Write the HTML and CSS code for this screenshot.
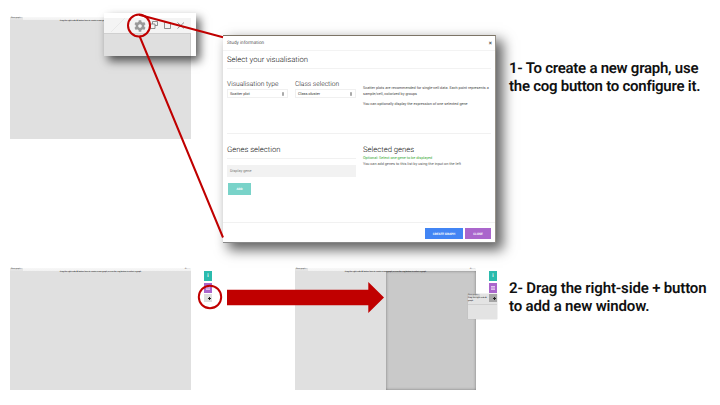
FILE: index.html
```
<!DOCTYPE html>
<html lang="en">
<head>
<meta charset="utf-8">
<title>Creating graphs</title>
<link rel="stylesheet" href="styles.css">
</head>
<body>
<main class="slide">
  <section class="step step-one">
    <div class="pane">
      <div class="window">
        <div class="titlebar"><span class="tab">New graph ×</span></div>
        <div class="canvas"><p class="hint">Drag the right-side <b>✚</b> button here to create a new graph, or use the cog button to select a graph</p></div>
      </div>
      <div class="magnifier">
        <div class="mag-bar">
          <svg width="92" height="15" viewBox="0 0 92 15">
            <path d="M7 14 21 0" stroke="#e9e9e9" fill="none"/>
            <g transform="translate(36 8)" stroke="#999" fill="none">
              <circle r="3.100" stroke-width="2.600"/>
              <path d="M0-3.500V-5.700M0 3.500V5.700M3-1.750 4.900-2.850M3 1.750 4.900 2.850M-3-1.750-4.900-2.850M-3 1.750-4.900 2.850" stroke-width="2.600"/>
            </g>
            <path d="M48.500 6V3.500h5V7.500h-2.500M46.500 6h4.500v4.500h-4.500zM60.500 4.500h6v6h-6zM73.500 4.500l6.500 6M80 4.500l-6.500 6" fill="none" stroke="#777" stroke-width=".8"/>
          </svg>
        </div>
        <div class="mag-body"></div>
      </div>
    </div>
    <div class="dialog">
      <header class="dialog-head"><span>Study information</span><span class="x">×</span></header>
      <h1>Select your visualisation</h1>
      <div class="choices">
        <div><h2>Visualisation type</h2><div class="select"><span>Scatter plot</span><svg width="2" height="4" viewBox="0 0 2 4"><path d="M0 1.600 1 0l1 1.600zM0 2.400 1 4l1-1.600z" fill="#333"/></svg></div></div>
        <div><h2>Class selection</h2><div class="select"><span>Class:cluster</span><svg width="2" height="4" viewBox="0 0 2 4"><path d="M0 1.600 1 0l1 1.600zM0 2.400 1 4l1-1.600z" fill="#333"/></svg></div></div>
        <div class="about"><p>Scatter plots are recommended for single-cell data. Each point represents a<br>sample/cell, colorized by groups</p><p>You can optionally display the expression of one selected gene</p></div>
      </div>
      <div class="genes">
        <div><h2 class="ruled">Genes selection</h2><div class="input">Display gene</div><div class="btn add">ADD</div></div>
        <div class="selected"><h2>Selected genes</h2><p class="green">Optional: Select one gene to be displayed</p><p class="listing">You can add genes to this list by using the input on the left</p></div>
      </div>
      <footer class="dialog-foot"><div class="btn create">CREATE GRAPH</div><div class="btn close">CLOSE</div></footer>
    </div>
    <p class="caption">1- To create a new graph, use<br>the cog button to configure it.</p>
  </section>
  <section class="step step-two">
    <div class="window">
      <div class="titlebar"><span class="tab">New graph ×</span><span class="tools">✿▫ ▫ ×</span></div>
      <div class="canvas"><p class="hint">Drag the right-side <b>✚</b> button here to create a new graph, or use the cog button to select a graph</p></div>
    </div>
    <div class="rail">
      <div class="tile teal">i</div><div class="tile purple"><svg width="4" height="4" viewBox="0 0 4 4"><path d="M0 0h4v4H0z" fill="#e2c6ee"/><path d="M0 1.500h4M0 2.700h4" stroke="#aa66cc" stroke-width=".4"/></svg></div><div class="tile plus"><svg width="3" height="3" viewBox="0 0 3 3"><path d="M1.500 0v3M0 1.500h3" stroke="#222"/></svg></div>
    </div>
    <div class="window target">
      <div class="titlebar"><span class="tab">New graph ×</span><span class="tools">✿▫ ▫ ×</span></div>
      <div class="canvas split"><div class="drop"></div><p class="hint">Drag the right-side <b>✚</b> button here to create a new graph, or use the cog button to select a graph</p></div>
      <div class="ghost"><span class="ghost-tab">New graph ×</span><p>Drag the right-side ✚<br>graph</p></div>
    </div>
    <div class="rail rail-right">
      <div class="tile teal">i</div><div class="tile purple"><svg width="4" height="4" viewBox="0 0 4 4"><path d="M0 0h4v4H0z" fill="#e2c6ee"/><path d="M0 1.500h4M0 2.700h4" stroke="#aa66cc" stroke-width=".4"/></svg></div><div class="tile plus dark"><svg width="3" height="3" viewBox="0 0 3 3"><path d="M1.500 0v3M0 1.500h3" stroke="#222"/></svg></div>
    </div>
    <p class="caption">2- Drag the right-side + button<br>to add a new window.</p>
  </section>
  <svg class="annotations" width="720" height="405" viewBox="0 0 720 405">
    <g fill="none" stroke="#c00000" stroke-width="2">
      <path d="M139 14.800 223 37.200M139.500 36 223 237.500"/>
      <circle cx="139" cy="25.500" r="11"/>
      <circle cx="210" cy="297" r="11.200"/>
    </g>
    <path d="M227 289.800H368.300V282L384 297.500 368.300 313V305.200H227z" fill="#c00000"/>
  </svg>
</main>
</body>
</html>
```
FILE: styles.css
```
* { box-sizing: border-box; }
body { margin: 0; background: #fff; font-family: Roboto, "Liberation Sans", sans-serif; color: #333; text-rendering: geometricPrecision; }
p, h1, h2 { margin: 0; }
.slide { position: relative; width: 720px; height: 405px; overflow: hidden; display: grid; grid-template-rows: 258px 147px; }
.step { display: grid; align-items: start; }
.step-one { grid-template-columns: 213px 273px 1fr; padding-left: 10px; }
.step-two { grid-template-columns: 181px 8px 251px 8px 1fr; column-gap: 13px; padding: 10px 0 0 10px; }
.step-two .target { margin-left: 70px; }

.pane { position: relative; padding-top: 17px; }
.window { position: relative; width: 181px; height: 122px; display: flex; flex-direction: column; }
.titlebar { height: 3px; display: flex; justify-content: space-between; background: linear-gradient(#f8f8f8, #f1f1f1); font-size: 2px; line-height: 3px; color: #444; }
.tab { padding: 0 1px; background: #e4e4e4; white-space: nowrap; }
.tools { padding-right: 1px; color: #777; }
.canvas { flex: 1; background: #e0e0e0; position: relative; }
.hint { position: relative; text-align: center; font-size: 1.930px; line-height: 3px; font-weight: 500; color: #333; white-space: nowrap; }

.magnifier { position: absolute; left: 94px; top: 13px; width: 92px; height: 43px; padding-top: 5px; background: #fff; box-shadow: 4px 5px 9px rgba(0,0,0,.65); }
.mag-bar { width: 87px; height: 15px; background: #f4f4f4; }
.mag-bar svg { display: block; }
.mag-body { width: 87px; height: 23px; background: #dfdfdf; border-top: 1px solid #d0d0d0; border-right: 1px solid #ccc; }

.dialog { margin-top: 35px; width: 273px; height: 208px; background: #fff; border-top: 1px solid #7c7466; border-right: 1px solid #969188; border-bottom: 1px solid #888; box-shadow: 6px 6px 12px 1px rgba(0,0,0,.62); padding: 0 4px; display: flex; flex-direction: column; }
.dialog-head { height: 15px; margin: 0 -4px; padding: 0 3px 0 4px; border-bottom: 1px solid #f3f3f3; display: flex; justify-content: space-between; align-items: center; font-size: 4.700px; font-weight: 400; color: #555; }
.x { font-size: 6px; font-weight: 700; }
h1 { height: 18px; border-bottom: 1px solid #f2f2f2; font-size: 7.700px; line-height: 17px; font-weight: 300; color: #111; white-space: nowrap; }
h2 { font-size: 6.700px; line-height: 8px; font-weight: 300; color: #111; white-space: nowrap; }
.choices { height: 65px; padding-top: 11px; display: grid; grid-template-columns: 61px 61px 1fr; column-gap: 7px; border-bottom: 1px solid #f1f1f1; }
.select { margin-top: 1px; height: 9px; border: 1px solid #f0f0f0; display: flex; justify-content: space-between; align-items: center; padding: 0 3px 0 2px; font-size: 3.850px; color: #333; }
.about { padding-top: 5px; font-size: 3.780px; line-height: 6px; white-space: nowrap; color: #444; }
.about p + p { margin-top: 4px; }
.genes { height: 88px; padding-top: 11px; display: grid; grid-template-columns: 129px 1fr; column-gap: 7px; }
.genes h2 { font-size: 7.700px; line-height: 9px; }
.genes .ruled { height: 14px; border-bottom: 1px solid #f1f1f1; }
.input { margin-top: 6px; height: 12px; padding-left: 3px; background: #f2f2f2; font-size: 3.800px; line-height: 11px; color: #777; }
.btn { display: flex; align-items: center; justify-content: center; color: #fff; font-size: 3.100px; font-weight: 700; }
.add { width: 23px; height: 12px; margin: 6px 0 0 1px; background: #79d3c9; }
.selected p { font-size: 3.800px; line-height: 5.600px; white-space: nowrap; color: #555; }
.selected .green { color: #32a832; margin-top: 1px; }
.dialog-foot { flex: 1; margin: 0 -4px; padding: 5px 4px 0 0; border-top: 1px solid #f1f1f1; display: flex; justify-content: flex-end; gap: 2px; }
.dialog-foot .btn { height: 11px; }
.create { width: 38px; background: #4285f4; }
.close { width: 26px; background: #aa66cc; }

.caption { font-size: 15px; line-height: 18px; font-weight: 600; letter-spacing: -.26px; color: #111; white-space: nowrap; }
.step-one .caption { margin: 59px 0 0 13px; }
.step-two .caption { margin: 11px 0 0 -1px; letter-spacing: -.16px; }

.rail { padding-top: 3px; display: flex; flex-direction: column; gap: 1.500px; }
.tile { height: 10px; display: flex; align-items: center; justify-content: center; color: #fff; font-size: 5px; line-height: 5px; font-weight: 700; }
.teal { background: #2bbbad; }
.purple { background: #aa66cc; }
.plus { height: 8px; background: #dedede; padding-left: 3px; }
.dark { background: #a6a6a6; }
.rail-right { z-index: 2; }
.drop { position: absolute; inset: 0 0 0 91px; background: #c9c9c9; box-shadow: inset 0 0 3px #777; }
.ghost { position: absolute; left: 173px; top: 26px; width: 29px; height: 25px; background: #e3e3e3; font-size: 2px; line-height: 3px; color: #333; white-space: nowrap; box-shadow: 0 0 1px #aaa; }
.ghost-tab { display: block; width: 12px; height: 3px; background: #d2d2d2; }
.ghost p { height: 8px; border-bottom: 1px solid #d0d0d0; font-weight: 500; }
.annotations { position: absolute; inset: 0; z-index: 3; }
```
